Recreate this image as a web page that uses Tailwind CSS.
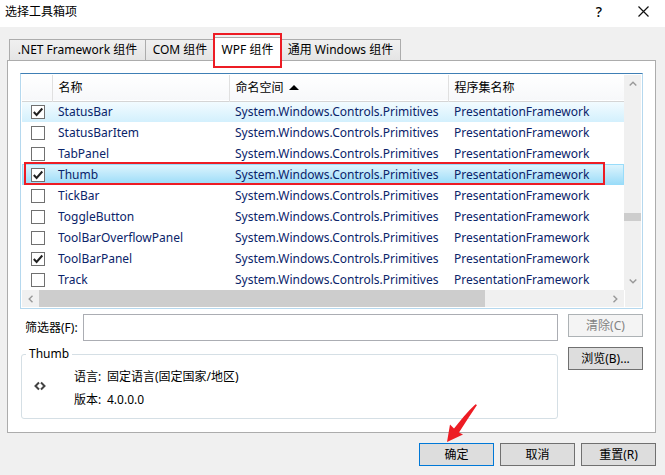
<!DOCTYPE html>
<html lang="zh-CN">
<head>
<meta charset="utf-8">
<title>选择工具箱项</title>
<script src="https://cdn.jsdelivr.net/npm/@tailwindcss/browser@4"></script>
</head>
<body class="flex min-h-screen flex-col bg-[#f0f0f0] font-['Noto_Sans','Noto_Sans_CJK_SC',sans-serif] text-[12px] leading-[18px] text-black">
<header class="flex h-[27px] items-center justify-between bg-white pr-[16px] pb-1 pl-[5px]">
  <h1>选择工具箱项</h1>
  <div class="flex items-center gap-[35px]">
    <button type="button" aria-label="帮助" class="w-[8px] text-[14px] font-medium">?</button>
    <button type="button" aria-label="关闭"><svg class="block h-[11px] w-[11px]" viewBox="0 0 11 11" fill="none" stroke="#111" stroke-width="1.2"><path d="M.5 .5l10 10M10.500 .5l-10 10"/></svg></button>
  </div>
</header>

<main class="flex flex-1 flex-col pr-[9px] pl-[7px] pt-[10px]">
  <div role="tablist" class="z-10 -mb-px flex items-end pl-[2px] whitespace-nowrap">
    <button role="tab" type="button" class="h-[22px] w-[137px] border border-[#acacac] bg-linear-to-b from-[#f0f0f0] to-[#e5e5e5]">.NET Framework 组件</button>
    <button role="tab" type="button" class="-ml-px h-[22px] w-[70px] border border-[#acacac] bg-linear-to-b from-[#f0f0f0] to-[#e5e5e5]">COM 组件</button>
    <button role="tab" type="button" aria-selected="true" class="relative -ml-px h-[24px] w-[67px] border border-b-0 border-[#acacac] bg-white">WPF 组件
      <span class="pointer-events-none absolute -top-[5px] -right-[2px] -left-[2px] h-[35px] border-2 border-[#ed1c24]"></span></button>
    <button role="tab" type="button" class="h-[22px] w-[120px] border border-l-0 border-[#acacac] bg-linear-to-b from-[#f0f0f0] to-[#e5e5e5]">通用 Windows 组件</button>
  </div>

  <section class="border border-[#acacac] bg-white px-[12px] pt-[12px] pb-[13px]">
    <div class="border border-[#b5d8ee] border-t-[#3f7fb5] p-px">
      <div class="flex">
        <table class="flex-1 table-fixed border-collapse text-left text-[#0a246a]">
          <colgroup><col class="w-[30px]"><col class="w-[177px]"><col class="w-[219px]"><col></colgroup>
          <thead class="text-black">
            <tr class="h-[26px] border-b border-[#d5d5d5] bg-linear-to-b from-white to-[#f7f8fa]">
              <th aria-label="选中" class="border-r border-[#e0e0e0] p-0"></th>
              <th class="border-r border-[#e0e0e0] p-0 pl-[6px] font-normal">名称</th>
              <th class="border-r border-[#e0e0e0] p-0 pl-[6px] font-normal"><span class="flex items-center gap-[5px]">命名空间<svg class="h-[5px] w-[10px]" viewBox="0 0 10 5"><path d="M5 0l5 5H0z"/></svg></span></th>
              <th class="p-0 pl-[6px] font-normal">程序集名称</th>
            </tr>
          </thead>
          <tbody id="rows"></tbody>
        </table>
        <div class="flex w-[17px] flex-col items-center bg-[#f0f0f0] pt-[6px] pb-[6px]">
          <svg class="h-[5px] w-[8px]" viewBox="0 0 8 5" fill="none" stroke="#999" stroke-width="1.400"><path d="M.7 4.500L4 1.200l3.300 3.300"/></svg>
          <span class="mt-[127px] h-[8px] w-full bg-[#cdcdcd]"></span>
          <svg class="mt-auto h-[5px] w-[8px]" viewBox="0 0 8 5" fill="none" stroke="#999" stroke-width="1.400"><path d="M.7 .5L4 3.800 7.300 .5"/></svg>
        </div>
      </div>
      <div class="flex h-[17px] gap-px">
        <div class="flex flex-1 items-center bg-[#f0f0f0]">
          <span class="flex w-[17px] justify-center"><svg class="h-[8px] w-[5px]" viewBox="0 0 5 8" fill="none" stroke="#999" stroke-width="1.400"><path d="M4.500 .7L1.200 4l3.300 3.300"/></svg></span>
          <span class="h-full w-[446px] bg-[#cdcdcd]"></span>
          <span class="ml-auto flex w-[17px] justify-center"><svg class="h-[8px] w-[5px]" viewBox="0 0 5 8" fill="none" stroke="#999" stroke-width="1.400"><path d="M.5 .7L3.800 4 .5 7.300"/></svg></span>
        </div>
        <span class="w-[16px] bg-[#f0f0f0]"></span>
      </div>
    </div>

    <div class="mt-[5px] flex gap-[10px]">
      <div class="flex-1">
        <div class="flex items-center pl-[5px]">
          <label for="filter" class="w-[58px] whitespace-nowrap">筛选器(F):</label>
          <input id="filter" type="text" class="h-[27px] flex-1 border border-[#abadb3] bg-white px-1 outline-none">
        </div>
        <fieldset class="mt-[4px] ml-px h-[74px] rounded-[3px] border border-[#d5dfe5]">
          <legend class="ml-[4px] px-[3px]">Thumb</legend>
          <div class="flex items-center pl-[12px]">
            <svg class="h-[10px] w-[12px]" viewBox="0 0 12 10" fill="none" stroke="#424242" stroke-width="2"><path d="M5 1.500L1.500 5 5 8.500M7 1.500L10.500 5 7 8.500"/></svg>
            <dl class="ml-[28px] grid grid-cols-[33px_auto] gap-y-[5px] pt-[5px]">
              <dt>语言:</dt><dd>固定语言(固定国家/地区)</dd>
              <dt>版本:</dt><dd>4.0.0.0</dd>
            </dl>
          </div>
        </fieldset>
      </div>
      <div class="flex w-[75px] flex-col gap-[10px]">
        <button type="button" disabled class="h-[23px] border border-[#adb2b5] bg-[#f4f4f4] text-[#838383]">清除(C)</button>
        <button type="button" class="h-[23px] border border-[#707070] bg-[#dddddd]">浏览(B)...</button>
      </div>
    </div>
  </section>

  <div class="mt-[10px] mb-[9px] flex justify-end gap-[6px]">
    <button type="button" class="relative h-[23px] w-[75px] border border-[#0078d7] bg-[#dddddd]">确定
      <svg class="pointer-events-none absolute -top-[41px] left-[26px] h-[40px] w-[32px]" viewBox="0 0 32 40" fill="#ed1c24"><path d="M1 39L4 21.500 8 25.500C14 18 21 9 29.500 1.200L31 2C25 11 19 20 13 29.500L17 31.500z"/></svg>
    </button>
    <button type="button" class="h-[23px] w-[75px] border border-[#707070] bg-[#dddddd]">取消</button>
    <button type="button" class="h-[23px] w-[75px] border border-[#707070] bg-[#dddddd]">重置(R)</button>
  </div>
</main>

<script>
const items = [['StatusBar',1,'bg-linear-to-b from-[#f4fcff] to-[#d3f0fd]'],['StatusBarItem'],['TabPanel'],
  ['Thumb',1,'relative bg-linear-to-b from-[#e0f5fd] via-[#bce8fb] to-[#98dbf8] shadow-[inset_0_0_0_1px_#98dcfa]'],
  ['TickBar'],['ToggleButton'],['ToolBarOverflowPanel'],['ToolBarPanel',1],['Track']];
document.getElementById('rows').innerHTML = items.map(([name, on, look]) => `
  <tr class="h-[21px] ${look || ''}">
    <td class="p-0 pl-[9px]">
      <span class="relative block h-[14px] w-[14px]">
        <input type="checkbox" id="c-${name}" ${on ? 'checked' : ''} class="peer block h-[14px] w-[14px] appearance-none border border-[#707070] bg-white">
        <svg class="pointer-events-none absolute top-0 left-0 hidden h-[14px] w-[14px] peer-checked:block" viewBox="0 0 14 14" fill="none" stroke="#212121" stroke-width="2"><path d="M2.800 7L5.600 10 11.300 3.500"/></svg>
      </span>
      ${name === 'Thumb' ? '<span class="pointer-events-none absolute -top-[2px] right-[19px] left-[2px] h-[23px] border-2 border-[#ed1c24]"></span>' : ''}
    </td>
    <td class="p-0 pl-[6px]"><label for="c-${name}">${name}</label></td>
    <td class="p-0 pl-[6px]">System.Windows.Controls.Primitives</td>
    <td class="p-0 pl-[6px]">PresentationFramework</td>
  </tr>`).join('');
</script>
</body>
</html>
